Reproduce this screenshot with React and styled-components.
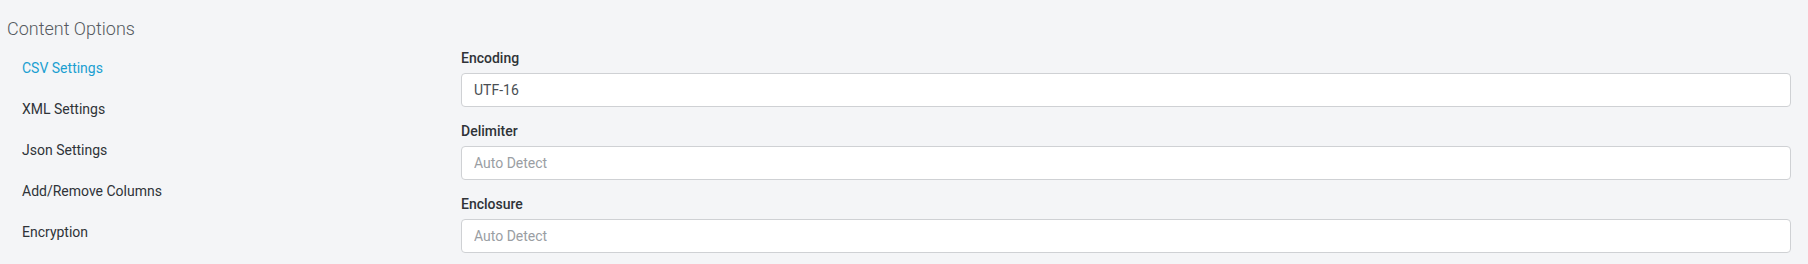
import React from 'react'
import styled, { createGlobalStyle } from 'styled-components'

const GlobalStyle = createGlobalStyle`
  html, body {
    margin: 0;
    padding: 0;
    background: #f4f5f7;
    font-family: Roboto, "Liberation Sans", sans-serif;
  }
`

const Page = styled.div`
  padding: 17px 17px 0 7px;
  height: 264px;
  box-sizing: border-box;
`

const Title = styled.div`
  font-size: 18px;
  line-height: 24px;
  font-weight: 300;
  color: #555a60;
  margin-bottom: 7px;
`

const Body = styled.div`
  display: grid;
  grid-template-columns: 454px 1fr;
`

const Nav = styled.ul`
  list-style: none;
  margin: 0;
  padding: 0;
`

const NavItem = styled.li`
  padding: 10px 15px;
  font-size: 14px;
  line-height: 21px;
  color: ${p => (p.$active ? '#1a9fd1' : '#2f3337')};
  cursor: pointer;
`

const Form = styled.div`
  display: flex;
  flex-direction: column;
  gap: 14px;
`

const Field = styled.div`
  display: flex;
  flex-direction: column;
  gap: 5px;
`

const Label = styled.label`
  font-size: 14px;
  line-height: 20px;
  font-weight: 500;
  color: #2f3337;
`

const Input = styled.input`
  height: 34px;
  box-sizing: border-box;
  border: 1px solid #cfd1d4;
  border-radius: 4px;
  background: #fff;
  padding: 0 12px;
  font-family: Roboto, "Liberation Sans", sans-serif;
  font-size: 14px;
  color: #4a4e53;
  outline: none;

  &::placeholder {
    color: #9a9ea3;
  }
`

const navItems = ['CSV Settings', 'XML Settings', 'Json Settings', 'Add/Remove Columns', 'Encryption']

const fields = [
  { label: 'Encoding', value: 'UTF-16' },
  { label: 'Delimiter', placeholder: 'Auto Detect' },
  { label: 'Enclosure', placeholder: 'Auto Detect' },
]

export default function App() {
  return (
    <>
      <GlobalStyle />
      <Page>
        <Title>Content Options</Title>
        <Body>
          <Nav>
            {navItems.map((item, i) => (
              <NavItem key={item} $active={i === 0}>{item}</NavItem>
            ))}
          </Nav>
          <Form>
            {fields.map(f => (
              <Field key={f.label}>
                <Label>{f.label}</Label>
                <Input readOnly value={f.value || ''} placeholder={f.placeholder} />
              </Field>
            ))}
          </Form>
        </Body>
      </Page>
    </>
  )
}
